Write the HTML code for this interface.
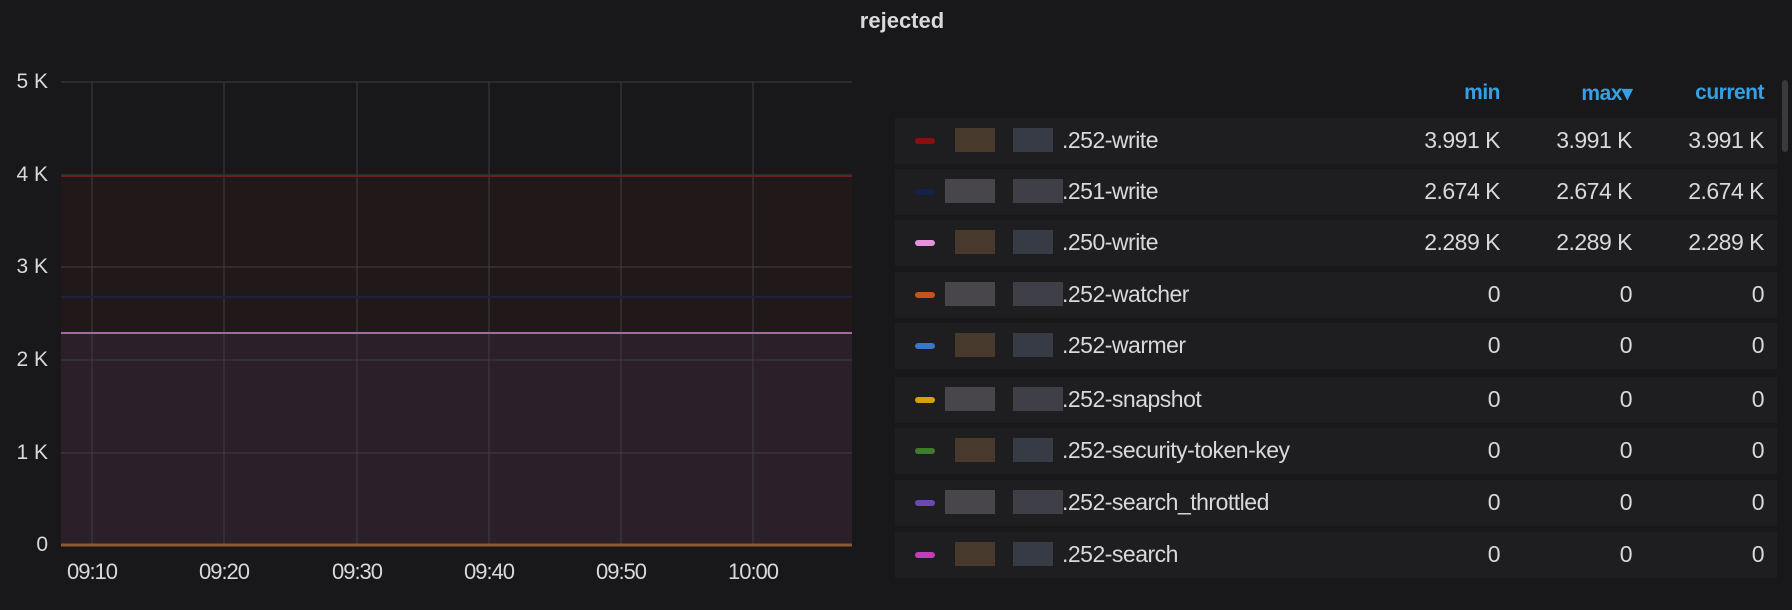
<!DOCTYPE html>
<html><head><meta charset="utf-8"><style>
*{margin:0;padding:0;box-sizing:border-box}
body{width:1792px;height:610px;background:#18181b;overflow:hidden;position:relative;font-family:"Liberation Sans",sans-serif;color:#d8d9da}
.t{position:absolute;left:0;width:1792px;top:8px;text-align:center;font-weight:bold;font-size:22px;color:#d8d9da;padding-left:12px}
.yl{position:absolute;width:44px;text-align:right;left:4px;font-size:21px;color:#d8d9da}
.xl{position:absolute;top:559px;font-size:22px;width:90px;text-align:center;color:#d8d9da;letter-spacing:-1px}
.row{position:absolute;left:895px;width:882px;height:46px;background:#1e1e21}
.sw{position:absolute;left:20px;width:20px;height:6px;border-radius:3px;top:20px}
.nm{position:absolute;left:167px;top:9px;font-size:23px;color:#d8d9da;letter-spacing:-.5px}
.v{position:absolute;top:9px;font-size:23px;text-align:right;width:140px;color:#d8d9da;letter-spacing:-.5px}
.h{position:absolute;top:81px;font-size:21px;font-weight:bold;color:#33a2e5;text-align:right;width:140px;letter-spacing:-.5px}
.blk{position:absolute;top:10px;height:24px;opacity:.55}
</style></head><body>
<div class="t">rejected</div>
<svg width="860" height="560" style="position:absolute;left:0;top:0">
<rect x="61" y="176" width="791" height="369" fill="#211819"/>
<rect x="61" y="333" width="791" height="212" fill="#2b1f2a"/>
<g stroke="#3e3e43" stroke-width="1">
<line x1="61" y1="82" x2="852" y2="82"/><line x1="61" y1="175" x2="852" y2="175"/><line x1="61" y1="267" x2="852" y2="267"/><line x1="61" y1="360" x2="852" y2="360"/><line x1="61" y1="453" x2="852" y2="453"/>
<line x1="92" y1="82" x2="92" y2="545"/><line x1="224" y1="82" x2="224" y2="545"/><line x1="357" y1="82" x2="357" y2="545"/><line x1="489" y1="82" x2="489" y2="545"/><line x1="621" y1="82" x2="621" y2="545"/><line x1="753" y1="82" x2="753" y2="545"/>
</g>
<line x1="61" y1="176" x2="852" y2="176" stroke="#6e1c1c" stroke-width="2"/>
<line x1="61" y1="297" x2="852" y2="297" stroke="#1c2340" stroke-width="2"/>
<line x1="61" y1="333" x2="852" y2="333" stroke="#a36b9d" stroke-width="2"/>
<line x1="61" y1="545" x2="852" y2="545" stroke="#8a5a34" stroke-width="3"/>
</svg>
<div class="yl" style="top:70px">5 K</div>
<div class="yl" style="top:163px">4 K</div>
<div class="yl" style="top:255px">3 K</div>
<div class="yl" style="top:348px">2 K</div>
<div class="yl" style="top:441px">1 K</div>
<div class="yl" style="top:533px">0</div>
<div class="xl" style="left:47px">09:10</div>
<div class="xl" style="left:179px">09:20</div>
<div class="xl" style="left:312px">09:30</div>
<div class="xl" style="left:444px">09:40</div>
<div class="xl" style="left:576px">09:50</div>
<div class="xl" style="left:708px">10:00</div>
<div class="h" style="left:1360px">min</div>
<div class="h" style="left:1492px">max▾</div>
<div class="h" style="left:1624px">current</div>
<div style="position:absolute;left:1782px;top:80px;width:6px;height:72px;background:#3a3a3e;border-radius:3px"></div>

<div class="row" style="top:118px"><div class="sw" style="background:#8b0e0e"></div><div class="blk" style="left:60px;width:40px;background:#6a5238"></div><div class="blk" style="left:118px;width:40px;background:#4d5366"></div><div class="nm">.252-write</div><div class="v" style="left:465px">3.991 K</div><div class="v" style="left:597px">3.991 K</div><div class="v" style="left:729px">3.991 K</div></div>
<div class="row" style="top:169px"><div class="sw" style="background:#14224a"></div><div class="blk" style="left:50px;width:50px;background:#6b6770"></div><div class="blk" style="left:118px;width:50px;background:#5b5d68"></div><div class="nm">.251-write</div><div class="v" style="left:465px">2.674 K</div><div class="v" style="left:597px">2.674 K</div><div class="v" style="left:729px">2.674 K</div></div>
<div class="row" style="top:220px"><div class="sw" style="background:#e394dd"></div><div class="blk" style="left:60px;width:40px;background:#6a5238"></div><div class="blk" style="left:118px;width:40px;background:#4d5366"></div><div class="nm">.250-write</div><div class="v" style="left:465px">2.289 K</div><div class="v" style="left:597px">2.289 K</div><div class="v" style="left:729px">2.289 K</div></div>
<div class="row" style="top:272px"><div class="sw" style="background:#c4541c"></div><div class="blk" style="left:50px;width:50px;background:#6b6770"></div><div class="blk" style="left:118px;width:50px;background:#5b5d68"></div><div class="nm">.252-watcher</div><div class="v" style="left:465px">0</div><div class="v" style="left:597px">0</div><div class="v" style="left:729px">0</div></div>
<div class="row" style="top:323px"><div class="sw" style="background:#3b76c9"></div><div class="blk" style="left:60px;width:40px;background:#6a5238"></div><div class="blk" style="left:118px;width:40px;background:#4d5366"></div><div class="nm">.252-warmer</div><div class="v" style="left:465px">0</div><div class="v" style="left:597px">0</div><div class="v" style="left:729px">0</div></div>
<div class="row" style="top:377px"><div class="sw" style="background:#d4a00e"></div><div class="blk" style="left:50px;width:50px;background:#6b6770"></div><div class="blk" style="left:118px;width:50px;background:#5b5d68"></div><div class="nm">.252-snapshot</div><div class="v" style="left:465px">0</div><div class="v" style="left:597px">0</div><div class="v" style="left:729px">0</div></div>
<div class="row" style="top:428px"><div class="sw" style="background:#3f7d2c"></div><div class="blk" style="left:60px;width:40px;background:#6a5238"></div><div class="blk" style="left:118px;width:40px;background:#4d5366"></div><div class="nm">.252-security-token-key</div><div class="v" style="left:465px">0</div><div class="v" style="left:597px">0</div><div class="v" style="left:729px">0</div></div>
<div class="row" style="top:480px"><div class="sw" style="background:#6a4ab0"></div><div class="blk" style="left:50px;width:50px;background:#6b6770"></div><div class="blk" style="left:118px;width:50px;background:#5b5d68"></div><div class="nm">.252-search_throttled</div><div class="v" style="left:465px">0</div><div class="v" style="left:597px">0</div><div class="v" style="left:729px">0</div></div>
<div class="row" style="top:532px"><div class="sw" style="background:#c03fb5"></div><div class="blk" style="left:60px;width:40px;background:#6a5238"></div><div class="blk" style="left:118px;width:40px;background:#4d5366"></div><div class="nm">.252-search</div><div class="v" style="left:465px">0</div><div class="v" style="left:597px">0</div><div class="v" style="left:729px">0</div></div>
</body></html>
